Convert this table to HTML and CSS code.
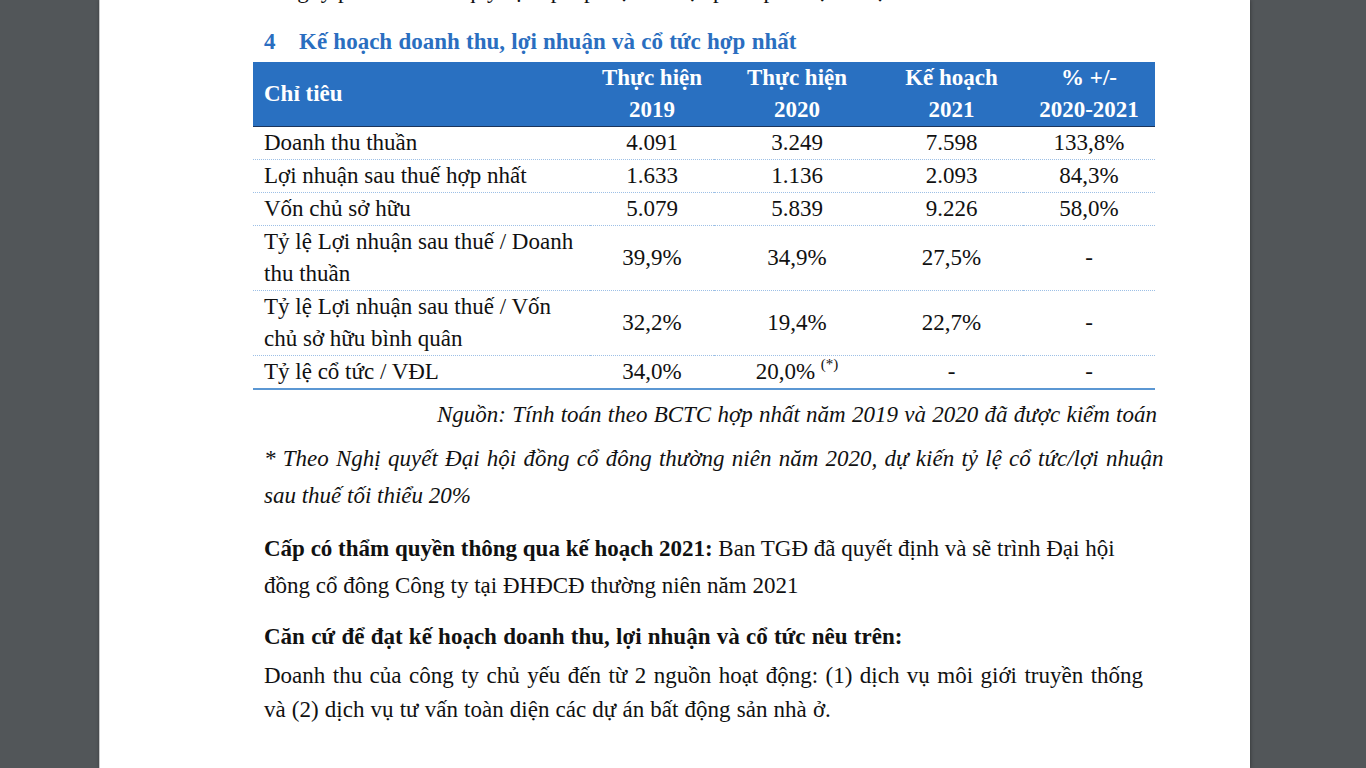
FILE: index.html
```html
<!DOCTYPE html>
<html lang="vi">
<head>
<meta charset="utf-8">
<title>Kế hoạch doanh thu, lợi nhuận và cổ tức hợp nhất</title>
<link rel="stylesheet" href="styles.css">
</head>
<body>
<div class="viewer">
  <div class="page">
    <p class="cut">công ty phải tuân thủ quy định pháp luật về việc phân phối lợi nhuận và chi trả cổ tức của doanh nghiệp</p>
    <h2 class="title"><span class="num">4</span>Kế hoạch doanh thu, lợi nhuận và cổ tức hợp nhất</h2>
    <table class="plan">
      <colgroup>
        <col class="w1"><col class="w2"><col class="w3"><col class="w4"><col class="w5">
      </colgroup>
      <thead>
        <tr>
          <th class="label">Chỉ tiêu</th>
          <th>Thực hiện<br>2019</th>
          <th>Thực hiện<br>2020</th>
          <th>Kế hoạch<br>2021</th>
          <th>% +/-<br>2020-2021</th>
        </tr>
      </thead>
      <tbody>
        <tr><td class="label">Doanh thu thuần</td><td>4.091</td><td>3.249</td><td>7.598</td><td>133,8%</td></tr>
        <tr><td class="label">Lợi nhuận sau thuế hợp nhất</td><td>1.633</td><td>1.136</td><td>2.093</td><td>84,3%</td></tr>
        <tr><td class="label">Vốn chủ sở hữu</td><td>5.079</td><td>5.839</td><td>9.226</td><td>58,0%</td></tr>
        <tr><td class="label">Tỷ lệ Lợi nhuận sau thuế / Doanh<br>thu thuần</td><td>39,9%</td><td>34,9%</td><td>27,5%</td><td>-</td></tr>
        <tr><td class="label">Tỷ lệ Lợi nhuận sau thuế / Vốn<br>chủ sở hữu bình quân</td><td>32,2%</td><td>19,4%</td><td>22,7%</td><td>-</td></tr>
        <tr class="last"><td class="label">Tỷ lệ cổ tức / VĐL</td><td>34,0%</td><td>20,0% <sup>(*)</sup></td><td>-</td><td>-</td></tr>
      </tbody>
    </table>
    <p class="source">Nguồn: Tính toán theo BCTC hợp nhất năm 2019 và 2020 đã được kiểm toán</p>
    <p class="note"><span class="spread-note">* Theo Nghị quyết Đại hội đồng cổ đông thường niên năm 2020, dự kiến tỷ lệ cổ tức/lợi nhuận</span><br>sau thuế tối thiểu 20%</p>
    <p class="para"><b>Cấp có thẩm quyền thông qua kế hoạch 2021:</b> Ban TGĐ đã quyết định và sẽ trình Đại hội<br>đồng cổ đông Công ty tại ĐHĐCĐ thường niên năm 2021</p>
    <p class="heading">Căn cứ để đạt kế hoạch doanh thu, lợi nhuận và cổ tức nêu trên:</p>
    <p class="body"><span class="spread-body">Doanh thu của công ty chủ yếu đến từ 2 nguồn hoạt động: (1) dịch vụ môi giới truyền thống</span><br>và (2) dịch vụ tư vấn toàn diện các dự án bất động sản nhà ở.</p>
  </div>
</div>
</body>
</html>
```

FILE: styles.css
```css
html, body {
  margin: 0;
  padding: 0;
  height: 100%;
  background: #525659;
  overflow: hidden;
}

.viewer {
  display: flex;
  height: 768px;
  padding-left: 100px;
}

.page {
  width: 1150px;
  height: 768px;
  background: #ffffff;
  box-shadow: -1px 0 0 #c8c9ca, 0 0 4px rgba(0, 0, 0, 0.45);
  padding: 0 93px 0 153px;
  box-sizing: border-box;
  font-family: "Liberation Serif", "Times New Roman", serif;
  font-size: 23px;
  color: #111111;
  overflow: hidden;
}

.page p, .page h2 {
  margin: 0;
}

.cut {
  height: 5px;
  overflow: hidden;
  display: flex;
  align-items: flex-end;
  padding-left: 11px;
  line-height: 28px;
  white-space: nowrap;
}

.title {
  margin-top: 22px !important;
  padding-left: 11px;
  font-size: 23px;
  line-height: 30px;
  font-weight: bold;
  color: #2a6ec0;
  word-spacing: 0.5px;
}

.title .num {
  display: inline-block;
  width: 35px;
}

.plan {
  margin-top: 5px;
  width: 902px;
  border-collapse: collapse;
  table-layout: fixed;
}

.w1 { width: 337px; }
.w2 { width: 124px; }
.w3 { width: 166px; }
.w4 { width: 143px; }
.w5 { width: 132px; }

.plan th {
  background: #2970c1;
  color: #ffffff;
  font-weight: bold;
  font-size: 23px;
  line-height: 32px;
  padding: 0;
  height: 64px;
  text-align: center;
  vertical-align: middle;
  border-bottom: 1px solid #1b355c;
}

.plan th.label {
  text-align: left;
  padding-left: 11px;
}

.plan td {
  padding: 0;
  line-height: 32px;
  text-align: center;
  vertical-align: middle;
  border-bottom: 1px dotted #9dc0e6;
}

.plan td.label {
  text-align: left;
  padding-left: 11px;
}

.plan tr.last td {
  border-bottom: 2px solid #5b97d3;
}

.plan sup {
  font-size: 15px;
  line-height: 0;
  vertical-align: 10px;
}

.source {
  margin-top: 6px !important;
  text-align: right;
  font-style: italic;
  line-height: 37px;
  word-spacing: 0.5px;
}

.note {
  margin-top: 7px !important;
  padding-left: 11px;
  font-style: italic;
  line-height: 37px;
  white-space: nowrap;
}

.spread-note {
  word-spacing: 1.5px;
}

.para {
  margin-top: 16px !important;
  padding-left: 11px;
  line-height: 37px;
  white-space: nowrap;
}

.heading {
  margin-top: 14px !important;
  padding-left: 11px;
  font-weight: bold;
  line-height: 37px;
  word-spacing: 0.5px;
  white-space: nowrap;
}

.body {
  margin-top: 4px !important;
  padding-left: 11px;
  line-height: 34px;
  word-spacing: 0.4px;
  white-space: nowrap;
}

.spread-body {
  word-spacing: 1.7px;
}
```
